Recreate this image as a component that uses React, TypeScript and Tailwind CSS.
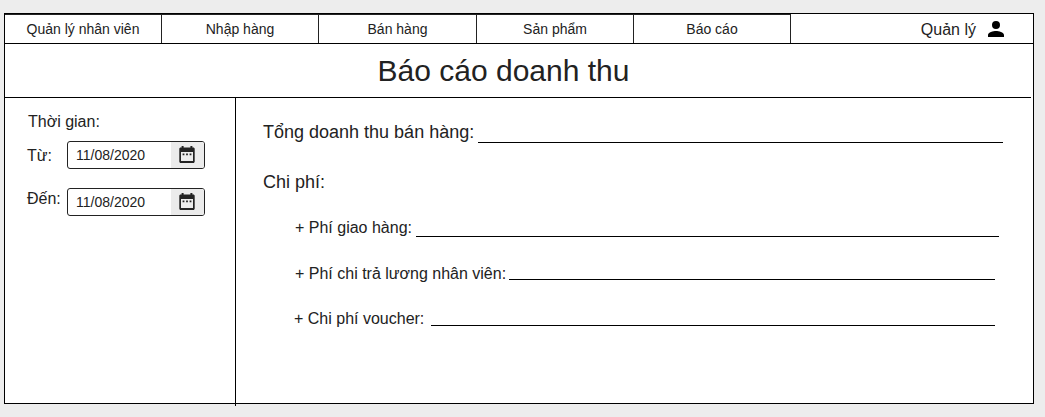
const tabs = [
  { label: 'Quản lý nhân viên', width: 'w-[157px]' },
  { label: 'Nhập hàng', width: 'w-[157px]' },
  { label: 'Bán hàng', width: 'w-[158px]' },
  { label: 'Sản phẩm', width: 'w-[157px]' },
  { label: 'Báo cáo', width: 'w-[157px]' },
];

function UserIcon() {
  return (
    <svg viewBox="4 4 16 16" className="size-4" fill="#000">
      <path d="M12 12a4 4 0 1 0 0-8 4 4 0 0 0 0 8zm0 2c-2.67 0-8 1.34-8 4v2h16v-2c0-2.66-5.33-4-8-4z" />
    </svg>
  );
}

function CalendarIcon() {
  return (
    <svg viewBox="0 0 16 17" className="h-[17px] w-4" fill="#222">
      <path
        fillRule="evenodd"
        d="M2.6 0h2v1.6h6.8V0h2v1.6h.8c.9 0 1.5.6 1.5 1.4v12.4c0 .9-.6 1.5-1.5 1.5H1.8c-.9 0-1.5-.6-1.5-1.5V3c0-.8.6-1.4 1.5-1.4h.8zM2 6v9.1h12V6z"
      />
      <path d="M3.6 7.6h1.8v1.7H3.6zM7.1 7.6h1.8v1.7H7.1zM10.6 7.6h1.8v1.7h-1.8z" />
    </svg>
  );
}

function DateField({ value }: { value: string }) {
  return (
    <div className="flex h-7 w-[138px] overflow-hidden rounded-[3px] border border-[#222] bg-white">
      <span className="flex-1 pl-2 text-sm leading-[26px]">{value}</span>
      <span className="flex w-[33px] items-start bg-[#ebebeb] pt-1 pl-2">
        <CalendarIcon />
      </span>
    </div>
  );
}

function Sidebar() {
  return (
    <aside className="-mb-[3px] w-[231px] border-r border-black pt-[14px] pl-[22px] text-base leading-5">
      <p className="pl-px">Thời gian:</p>
      <div className="mt-[9px] flex">
        <span className="w-10 pt-[5px]">Từ:</span>
        <DateField value="11/08/2020" />
      </div>
      <div className="mt-[19px] flex">
        <span className="w-10 pt-px">Đến:</span>
        <DateField value="11/08/2020" />
      </div>
    </aside>
  );
}

function Report() {
  return (
    <section className="flex-1 pt-6 pl-[27px] text-base leading-5">
      <div className="flex h-[50px] text-lg leading-5">
        <span className="w-[215px] whitespace-nowrap">Tổng doanh thu bán hàng:</span>
        <span className="mt-5 h-px w-[525px] bg-black" />
      </div>
      <div className="h-[46px] text-lg leading-5">Chi phí:</div>
      <div className="flex h-[46px] pl-8">
        <span className="w-[121px] whitespace-nowrap">+ Phí giao hàng:</span>
        <span className="mt-[18px] h-px w-[583px] bg-black" />
      </div>
      <div className="flex h-[45px] pl-8">
        <span className="w-[214px] whitespace-nowrap">+ Phí chi trả lương nhân viên:</span>
        <span className="mt-[15px] h-px w-[486px] bg-black" />
      </div>
      <div className="flex pl-[31px]">
        <span className="w-[137px] whitespace-nowrap">+ Chi phí voucher:</span>
        <span className="mt-4 h-px w-[564px] bg-black" />
      </div>
    </section>
  );
}

export default function App() {
  return (
    <div className="h-[417px] w-[1045px] bg-[#ededed] pt-[13px] pl-1 font-['Liberation_Sans',Arial,sans-serif] text-[#222]">
      <div className="flex h-[391px] w-[1030px] flex-col border border-black bg-white">
        <header className="flex h-[30px] border-b border-black">
          <nav className="flex">
            {tabs.map((tab) => (
              <a
                key={tab.label}
                className={`${tab.width} border-t border-r border-[#222] text-center text-sm leading-7`}
              >
                {tab.label}
              </a>
            ))}
          </nav>
          <div className="ml-auto flex pr-[29px]">
            <span className="pt-px text-base leading-[29px]">Quản lý</span>
            <span className="mt-[7px] ml-3">
              <UserIcon />
            </span>
          </div>
        </header>
        <h1 className="mr-[2px] h-[54px] border-b border-black pr-[29px] text-center text-[30px] leading-[53px]">
          Báo cáo doanh thu
        </h1>
        <main className="flex flex-1">
          <Sidebar />
          <Report />
        </main>
      </div>
    </div>
  );
}
